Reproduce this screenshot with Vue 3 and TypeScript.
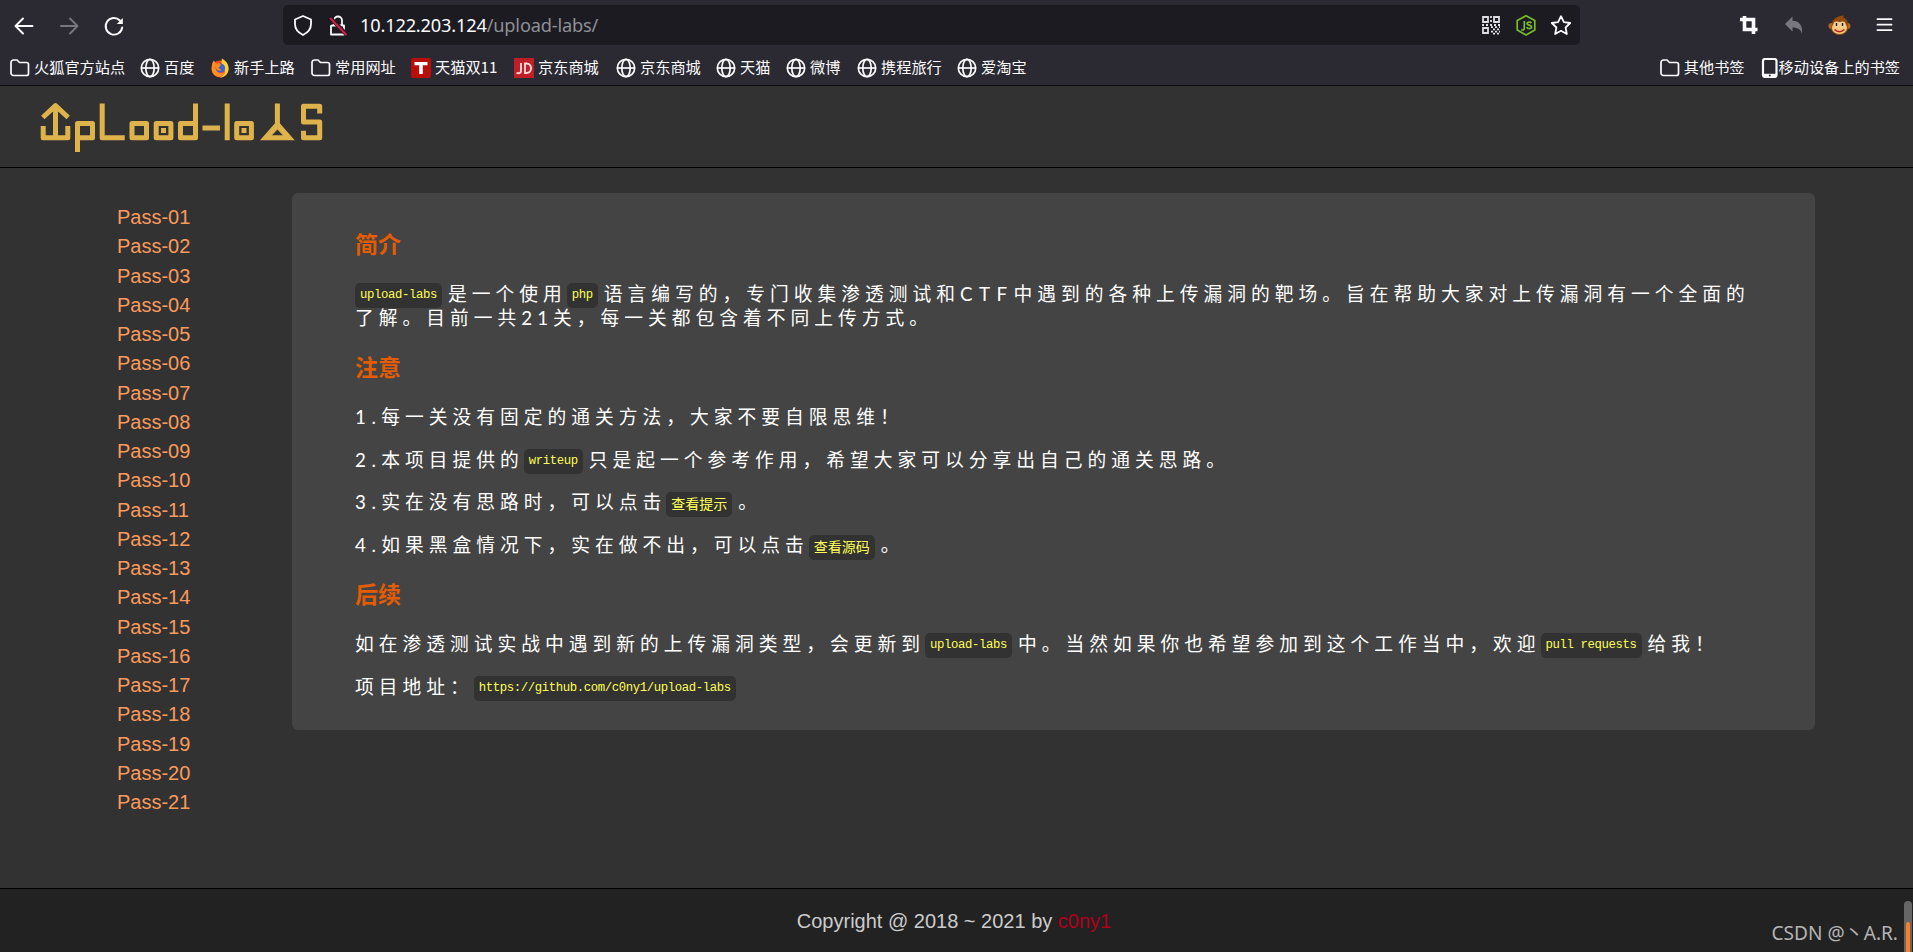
<script setup lang="ts">
interface Bookmark { icon: 'folder' | 'globe' | 'firefox' | 'tmall' | 'jd'; label: string; width: number }
interface Run { text: string; kind: 'text' | 'code' | 'cjk' | 'latin' | 'num' | 'caps' }

const bookmarks: Bookmark[] = [
  { icon: 'folder', label: '火狐官方站点', width: 130 },
  { icon: 'globe', label: '百度', width: 70 },
  { icon: 'firefox', label: '新手上路', width: 101 },
  { icon: 'folder', label: '常用网址', width: 100 },
  { icon: 'tmall', label: '天猫双11', width: 103 },
  { icon: 'jd', label: '京东商城', width: 102 },
  { icon: 'globe', label: '京东商城', width: 100 },
  { icon: 'globe', label: '天猫', width: 70 },
  { icon: 'globe', label: '微博', width: 71 },
  { icon: 'globe', label: '携程旅行', width: 100 },
  { icon: 'globe', label: '爱淘宝', width: 90 },
]
const passes: string[] = Array.from({ length: 21 }, (_, i) => 'Pass-' + String(i + 1).padStart(2, '0'))

const t = (text: string): Run => ({ text, kind: 'text' })
const l = (text: string): Run => ({ text, kind: 'latin' })
const n = (text: string): Run => ({ text, kind: 'num' })
const u = (text: string): Run => ({ text, kind: 'caps' })
const c = (text: string): Run => ({ text, kind: 'code' })
const z = (text: string): Run => ({ text, kind: 'cjk' })

const sections: { title: string; lines: Run[][] }[] = [
  {
    title: '简介',
    lines: [[c('upload-labs'), t('是一个使用'), c('php'), t('语言编写的，专门收集渗透测试和'), u('CTF'), t('中遇到的各种上传漏洞的靶场。旨在帮助大家对上传漏洞有一个全面的了解。目前一共'), l('21'), t('关，每一关都包含着不同上传方式。')]],
  },
  {
    title: '注意',
    lines: [
      [n('1.'), t('每一关没有固定的通关方法，大家不要自限思维！')],
      [n('2.'), t('本项目提供的'), c('writeup'), t('只是起一个参考作用，希望大家可以分享出自己的通关思路。')],
      [n('3.'), t('实在没有思路时，可以点击'), z('查看提示'), t('。')],
      [n('4.'), t('如果黑盒情况下，实在做不出，可以点击'), z('查看源码'), t('。')],
    ],
  },
  {
    title: '后续',
    lines: [
      [t('如在渗透测试实战中遇到新的上传漏洞类型，会更新到'), c('upload-labs'), t('中。当然如果你也希望参加到这个工作当中，欢迎'), c('pull requests'), t('给我！')],
      [t('项目地址：'), c('https://github.com/c0ny1/upload-labs')],
    ],
  },
]
</script>

<template>
  <div class="window">
    <div class="toolbar">
      <svg class="nav" width="130" height="50" viewBox="0 0 130 50" fill="none" stroke="#fbfbfe" stroke-width="1.9" stroke-linecap="round" stroke-linejoin="round">
        <path d="M32.500 26H16M23 18.500 15.500 26l7.500 7.500" />
        <path d="M61 26h16.500M70 18.500l7.500 7.500-7.500 7.500" stroke="#77767e" />
        <path d="M122.200 27.500a8.300 8.300 0 1 1-2.300-7" />
        <path d="M122.800 18v6h-6z" fill="#fbfbfe" stroke="none" />
      </svg>
      <div class="urlbar">
        <svg width="72" height="40" viewBox="0 0 72 40" fill="none" stroke="#fbfbfe" stroke-width="1.8" stroke-linejoin="round" stroke-linecap="round">
          <path d="M20 11l8 3.500v4.500c0 5-3 8.500-8 11-5-2.500-8-6-8-11v-4.500z" />
          <path d="M49 20.500h12v9H48v-8.500M51 20v-4.500a4 4 0 0 1 8 0V20" />
          <path d="M47.500 13l15.500 16" stroke="#1c1b22" stroke-width="4" />
          <path d="M47.500 13.500L63 29.500" stroke="#e4184a" />
        </svg>
        <span class="url"><b>10.122.203.124</b>/upload-labs/</span>
        <svg class="actions" width="100" height="40" viewBox="0 0 100 40">
          <g fill="none" stroke="#dedee2" stroke-width="1.800">
            <path d="M3 12h5v5H3zM14 12h5v5h-5zM3 23h5v5H3z" />
            <path d="M2 20h18M11 22.200h9M13 24.400h7M11 26.600h9M13 28.600h7" stroke-dasharray="2 2" />
            <path d="M11 11v8" stroke-dasharray="2 2" />
          </g>
          <path d="M46 10.700l8.800 4.900v9.500L46 30l-8.800-4.900v-9.500z" fill="none" stroke="#78bd28" stroke-width="1.700" />
          <path d="M44.300 16v7.300c0 1.800-1.200 2-3 1.300M51.500 18c-1-1.300-4.500-1.300-4.500.6 0 2 4.600.9 4.600 3.300 0 2-3.800 2.200-5 .4" fill="none" stroke="#78bd28" stroke-width="1.700" />
          <path d="M81 11.200l2.900 5.900 6.300.9-4.600 4.500 1.200 6.500-5.800-3.200-5.800 3.200 1.200-6.500-4.600-4.500 6.300-.9z" fill="none" stroke="#fbfbfe" stroke-width="1.800" stroke-linejoin="round" />
        </svg>
      </div>
      <svg class="tools" width="180" height="50" viewBox="0 0 180 50" fill="none">
        <path d="M11.500 16v13.500H24.500M7 19.500h13.500V34" stroke="#fbfbfe" stroke-width="3.600" />
        <path d="M59.500 16.500v4.200c6 .2 10.500 4 9.500 13-1.200-4-4-6.200-9.500-6.200v4L52 24z" fill="#77767e" />
        <g>
          <circle cx="98.500" cy="26" r="3" fill="#b5651d" /><circle cx="114.500" cy="26" r="3" fill="#b5651d" />
          <path d="M99 27c-1-7 3-9 8-11l4-.5-1 2c4 1 5.500 5 5 10z" fill="#934a0b" />
          <ellipse cx="106.500" cy="28" rx="8" ry="6.500" fill="#f5c77e" stroke="#934a0b" />
          <circle cx="103.500" cy="24.500" r="3" fill="#f5d397" /><circle cx="109.500" cy="24.500" r="3" fill="#f5d397" />
          <path d="M103.500 23v3M109.500 23v3" stroke="#222" stroke-width="1.500" />
          <path d="M101.500 29.500c3 2.800 7 2.800 10 0" stroke="#b3261e" stroke-width="1.600" />
        </g>
        <path d="M144.500 19.200h14M144.500 24.700h14M144.500 30.200h14" stroke="#fbfbfe" stroke-width="1.800" stroke-linecap="round" />
      </svg>
    </div>

    <div class="bookmarks">
      <span v-for="(b, i) in bookmarks" :key="i" class="bookmark" :style="{ width: b.width + 'px' }">
        <svg class="mark" width="20" height="20" viewBox="0 0 20 20" fill="none" stroke="#fbfbfe" stroke-width="1.700">
          <path v-if="b.icon === 'folder'" d="M1 4.500a2.500 2.500 0 0 1 2.500-2.500H7l2.500 2.500h7A2 2 0 0 1 18.500 6.500v9a2 2 0 0 1-2 2h-13a2.500 2.500 0 0 1-2.500-2.500z" />
          <g v-else-if="b.icon === 'globe'">
            <circle cx="10" cy="10" r="8.700" /><ellipse cx="10" cy="10" rx="4.200" ry="8.700" /><path d="M1.300 10h17.400" />
          </g>
          <g v-else-if="b.icon === 'firefox'" stroke="none">
            <circle cx="10" cy="11" r="8.500" fill="#ff4b2b" />
            <path d="M12 .5c5 3 7.500 7 6.300 12.500C17 17 14 19.500 10 19.500c4-2 6-5 4.500-9C13 8 10.500 6 12 .5z" fill="#ffd32e" />
            <path d="M2 7c0-2 1-3.500 2-4.500l2 3C4 9 6 14 10 15c2 1 4 0 5-1-1 4-5 6-9 4C2.500 16 1 12 2 7z" fill="#ff9020" />
            <circle cx="10.500" cy="10" r="4.600" fill="#3a62d9" />
            <path d="M5 6l4-1 2 2-2.500 3 3 2c-3 2-6.500-.5-6.500-6z" fill="#ff8a16" />
          </g>
          <g v-else-if="b.icon === 'tmall'" stroke="none">
            <rect width="20" height="20" rx="2" fill="#b80f0a" /><path d="M3.500 4h13v3.300h-4.700V16H8.200V7.300H3.500z" fill="#fff" />
          </g>
          <g v-else>
            <rect width="20" height="20" fill="#be1f28" stroke="none" />
            <path d="M7 5v8c0 2.500-2.500 2.500-4.500 1.800M11 5.500v9.500h1.500c6 0 6-9.500 0-9.500z" stroke="#ffd8d8" stroke-width="1.900" />
          </g>
        </svg><span class="label">{{ b.label }}</span>
      </span>
      <span class="bookmark others">
        <svg class="mark" width="20" height="20" viewBox="0 0 20 20" fill="none" stroke="#fbfbfe" stroke-width="1.700">
          <path d="M1 4.500a2.500 2.500 0 0 1 2.500-2.500H7l2.500 2.500h7A2 2 0 0 1 18.500 6.500v9a2 2 0 0 1-2 2h-13a2.500 2.500 0 0 1-2.500-2.500z" />
        </svg><span class="label">其他书签</span>
      </span>
      <span class="bookmark">
        <svg width="18" height="20" viewBox="0 0 17 20">
          <rect x="1.500" y="1" width="13.500" height="18" rx="2" fill="none" stroke="#fbfbfe" stroke-width="2.200" />
          <path d="M2 17.300h12.500" stroke="#fbfbfe" stroke-width="3" /><circle cx="8.300" cy="17.500" r="1" fill="#2b2a33" />
        </svg><span class="label">移动设备上的书签</span>
      </span>
    </div>

    <header class="header">
      <svg width="303" height="80" viewBox="20 86 303 80" fill="none" stroke="#deb34b" stroke-width="5" stroke-linejoin="round">
        <path d="M43.200 126v11.700h24.600V126M55.500 138v-29M42.800 117.500l12.700-11.800 12.700 11.800" />
        <path d="M53 106h5l5 6H48z" fill="#deb34b" stroke="none" />
        <path d="M77.500 152v-28.500h15v14.300H78" />
        <path d="M102.200 103.500v34.300h22.500" />
        <path d="M132 123.500h14.500v14.300H132zM156.200 123.500h14.700v14.300h-14.700zM195.500 103.500v34.300h-15v-14.300h15M202.500 128h17.500M227.200 103.500v36.800M236.700 123.500h14.700v14.300h-14.700z" />
        <path d="M277.400 103.500v20" />
        <path d="M277.400 120.500l17.300 19.800H260zm0 9l-5.500 5.800h11z" fill="#deb34b" fill-rule="evenodd" stroke="none" />
        <path d="M319.700 113.500v-7.300h-16.200V122h16.200v15.800h-16.200v-7" />
        <path d="M161 130.500h5M241.500 130.500h5" />
      </svg>
    </header>

    <main class="body">
      <nav class="menu"><a v-for="p in passes" :key="p">{{ p }}</a></nav>
      <section class="panel">
        <template v-for="s in sections" :key="s.title">
          <h3>{{ s.title }}</h3>
          <p v-for="(line, i) in s.lines" :key="i"><span v-for="(r, j) in line" :key="j" :class="r.kind">{{ r.text }}</span></p>
        </template>
      </section>
    </main>

    <footer class="footer">
      <span>Copyright @ 2018 ~ 2021 by <a>c0ny1</a></span>
      <span class="watermark">CSDN @丶A.R.</span>
      <span class="scroll"><i></i></span>
    </footer>
  </div>
</template>

<style>
body { margin: 0; overflow: hidden; background: #323232; }
</style>

<style scoped>
.window { width: 1913px; height: 952px; display: flex; flex-direction: column; overflow: hidden; background: #323232; position: relative; font-family: "Liberation Sans", "Noto Sans CJK SC", sans-serif; }
.toolbar { height: 50px; flex: none; background: #2b2a33; display: flex; }
.nav { margin-right: 153px; flex: none; }
.urlbar { width: 1297px; height: 40px; margin-top: 5px; flex: none; border-radius: 5px; background: #1c1b22; display: flex; align-items: center; }
.url { margin-left: 5px; font: 18.2px/40px "Noto Sans", sans-serif; letter-spacing: -0.17px; color: #8f8f96; white-space: pre; }
.url b { font-weight: 400; color: #fbfbfe; }
.actions { margin-left: auto; }
.tools { margin-left: 153px; flex: none; }
.bookmarks { height: 35px; flex: none; padding: 0 13px 0 10px; background: #2b2a33; border-bottom: 1px solid #0c0c0d; display: flex; align-items: center; color: #fbfbfe; font: 15.2px/33px "Noto Sans CJK SC", sans-serif; }
.bookmark { display: flex; align-items: center; flex: none; white-space: nowrap; }
.label { height: 35px; }
.mark { margin-right: 4px; flex: none; }
.others { margin-left: auto; margin-right: 16px; }
.header { height: 81px; flex: none; border-bottom: 1px solid #000; display: flex; padding-left: 20px; }
.header svg { flex: none; }
.body { height: 720px; flex: none; display: flex; align-items: flex-start; }
.menu { width: 292px; flex: none; box-sizing: border-box; padding: 35px 0 0 117px; display: flex; flex-direction: column; }
.menu a { font-size: 20px; line-height: 29.25px; color: #fa9a5c; }
.panel { width: 1523px; height: 537px; margin-top: 25px; flex: none; box-sizing: border-box; padding: 33px 63px 0; border-radius: 6px; background: #444; color: #fff; }
h3 { margin: 0; height: 35px; font: 700 23px/35px "Noto Sans CJK SC", sans-serif; color: #e35c00; }
p + h3 { margin-top: 19.9px; }
p { margin: 20px 0 0; font-size: 18.75px; line-height: 24px; letter-spacing: 5px; font-family: "Noto Sans CJK SC", sans-serif; line-break: anywhere; }
p + p { margin-top: 18.75px; }
.latin, .num, .caps { font-family: Lato, sans-serif; line-height: 0; }
.num { letter-spacing: 5.5px; }
.caps { letter-spacing: 6.4px; }
.code, .cjk { display: inline-block; height: 25px; margin: -4px 6px -4px 0; padding: 0 5px; border-radius: 5px; background: #323232; color: #ff5; letter-spacing: -0.38px; font: 12.3px/25px "Liberation Mono", monospace; vertical-align: middle; white-space: pre; }
.cjk { font: 14px/23px "Noto Sans CJK SC", sans-serif; letter-spacing: 0; }
.footer { height: 64px; flex: none; border-top: 1px solid #000; box-sizing: border-box; background: #222; display: flex; justify-content: center; padding-right: 5px; font-size: 20px; line-height: 64px; color: #ccc; }
.footer a { color: #b0001e; }
.watermark { position: absolute; right: 15px; bottom: 2px; font: 19.1px/34px "Noto Sans", "Noto Sans CJK SC", sans-serif; color: #b4b4b4; }
.scroll { position: absolute; right: 1px; bottom: 0; width: 8px; height: 51px; border-radius: 4px 4px 0 0; background: #666; display: flex; justify-content: center; align-items: flex-end; }
.scroll i { width: 4px; height: 30px; background: #ff7d26; border-radius: 2px 2px 0 0; }
</style>
